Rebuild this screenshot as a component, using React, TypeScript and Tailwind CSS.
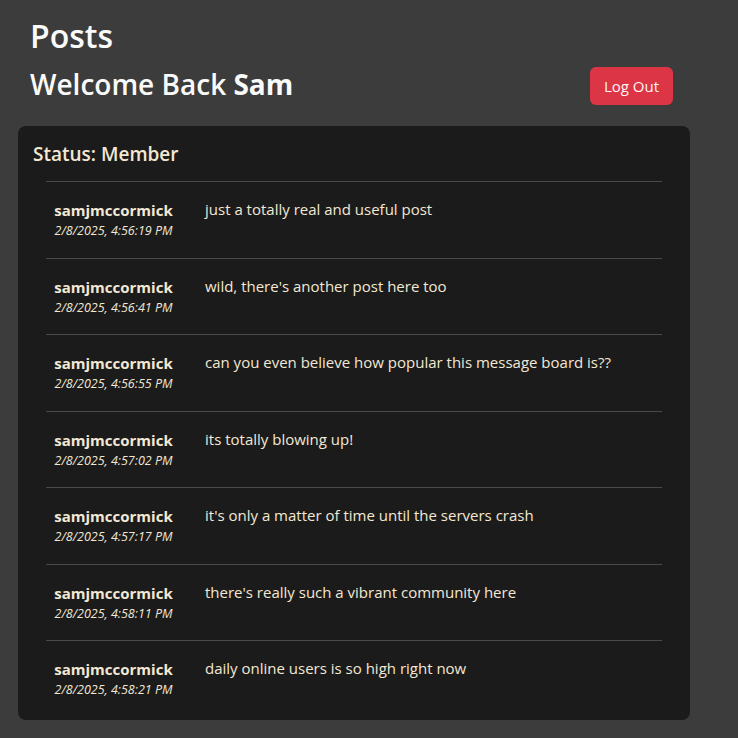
import React from "react";

const posts = [
  { user: "samjmccormick", date: "2/8/2025, 4:56:19 PM", text: "just a totally real and useful post" },
  { user: "samjmccormick", date: "2/8/2025, 4:56:41 PM", text: "wild, there's another post here too" },
  { user: "samjmccormick", date: "2/8/2025, 4:56:55 PM", text: "can you even believe how popular this message board is??" },
  { user: "samjmccormick", date: "2/8/2025, 4:57:02 PM", text: "its totally blowing up!" },
  { user: "samjmccormick", date: "2/8/2025, 4:57:17 PM", text: "it's only a matter of time until the servers crash" },
  { user: "samjmccormick", date: "2/8/2025, 4:58:11 PM", text: "there's really such a vibrant community here" },
  { user: "samjmccormick", date: "2/8/2025, 4:58:21 PM", text: "daily online users is so high right now" },
];

export default function App() {
  return (
    <div className="min-h-screen bg-[#3c3c3c] font-['Open_Sans',sans-serif] pb-[18px]">
      <div className="pl-[30px] pt-[17px] w-[673px]">
        <h1 className="text-[32px] leading-[38px] font-semibold text-[#fafafa]">Posts</h1>
        <div className="mt-[12px] flex items-start justify-between">
          <h2 className="text-[28px] leading-[34px] font-semibold text-[#fafafa]">
            Welcome Back <span className="font-bold">Sam</span>
          </h2>
          <button className="h-[38px] w-[83px] rounded-[6px] bg-[#dc3545] text-[15px] text-[#fff4f4]">
            Log Out
          </button>
        </div>
      </div>
      <div className="ml-[18px] mt-[21px] w-[672px] rounded-[8px] bg-[#1b1b1b] pt-[16px] pb-[3px] text-[#f3e8d4]">
        <h3 className="pl-[15px] text-[19px] leading-[24px] font-semibold">Status: Member</h3>
        <ul className="ml-[28px] mt-[15px] w-[616px]">
          {posts.map((p, i) => (
            <li key={i} className="flex items-start border-t border-[#4a4a4a] pb-[15.5px]">
              <div className="w-[135px] pt-[18px] text-center">
                <div className="text-[15px] leading-[20px] font-bold">{p.user}</div>
                <div className="text-[12.5px] leading-[22px] italic">{p.date}</div>
              </div>
              <div className="ml-[24px] pt-[17px] text-[15px] leading-[20px]">{p.text}</div>
            </li>
          ))}
        </ul>
      </div>
    </div>
  );
}
